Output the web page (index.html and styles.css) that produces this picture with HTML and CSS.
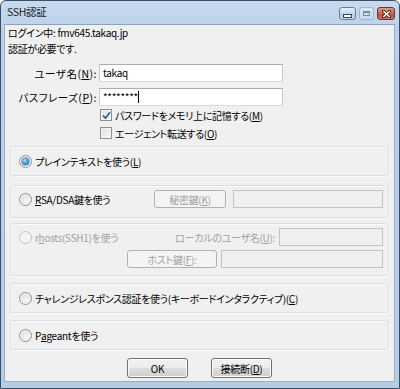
FILE: index.html
```html
<!DOCTYPE html>
<html lang="ja">
<head>
<meta charset="utf-8">
<title>SSH認証</title>
<link rel="stylesheet" href="styles.css">
</head>
<body>
<div class="window">
  <div class="titlebar">
    <span class="title">SSH認証</span>
    <div class="caps">
      <span class="cap cap-min"><span class="glyph-min"></span></span>
      <span class="cap cap-max"><span class="glyph-max"></span></span>
      <span class="cap cap-close"><svg width="9" height="8" viewBox="0 0 9 8"><path d="M1.2 1 L7.8 7 M7.8 1 L1.2 7" stroke="#3b1a16" stroke-width="3" stroke-linecap="square"/><path d="M1.2 1 L7.8 7 M7.8 1 L1.2 7" stroke="#fff" stroke-width="1.6"/></svg></span>
    </div>
  </div>
  <div class="client">
    <p class="info">ログイン中: fmv645.takaq.jp</p>
    <p class="info">認証が必要です.</p>
    <div class="field"><span class="lbl">ユーザ名(<u>N</u>):</span><span class="textbox">takaq</span></div>
    <div class="field last"><span class="lbl">パスフレーズ(<u>P</u>):</span><span class="textbox">********<span class="caret"></span></span></div>
    <div class="chk-row"><span class="check"><svg width="9" height="9" viewBox="0 0 9 9"><path d="M1 4.5 L3.5 7.2 L8 1.2" fill="none" stroke="#3d5a9c" stroke-width="1.8"/></svg></span>パスワードをメモリ上に記憶する(<u>M</u>)</div>
    <div class="chk-row"><span class="check"></span>エージェント転送する(<u>O</u>)</div>

    <div class="group g1">
      <div class="grow"><span class="radio on"></span>プレインテキストを使う(<u>L</u>)</div>
    </div>
    <div class="group g2">
      <div class="grow"><span class="radio"></span><span><u>R</u>SA/DSA鍵を使う</span><span class="btn dis w72 push">秘密鍵(<u>K</u>)</span><span class="textbox dis w150"></span></div>
    </div>
    <div class="group g3 disabled">
      <div class="grow"><span class="radio dis"></span>r<u>h</u>osts(SSH1)を使う<span class="push">ローカルのユーザ名(<u>U</u>):</span><span class="textbox dis w104"></span></div>
      <div class="grow"><span class="btn dis w90 push">ホスト鍵(<u>F</u>):</span><span class="textbox dis w162"></span></div>
    </div>
    <div class="group g4">
      <div class="grow"><span class="radio"></span>チャレンジレスポンス認証を使う(キーボードインタラクティブ)(<u>C</u>)</div>
    </div>
    <div class="group g5">
      <div class="grow"><span class="radio"></span>P<u>a</u>geantを使う</div>
    </div>
    <div class="buttons">
      <span class="btn w61">OK</span>
      <span class="btn w61">接続断(<u>D</u>)</span>
    </div>
  </div>
</div>
</body>
</html>
```

FILE: styles.css
```css
* { box-sizing: border-box; }
html, body { margin: 0; padding: 0; }
body {
  width: 400px;
  height: 389px;
  overflow: hidden;
  background: #fff;
  font-family: "Noto Sans CJK JP", "Noto Sans", sans-serif;
  font-size: 10px;
  letter-spacing: -0.3px;
  font-feature-settings: "palt";
  color: #000;
}
u { text-decoration: underline; text-underline-offset: 1px; }

.window {
  width: 400px;
  height: 389px;
  border: 1px solid #3d4e63;
  border-radius: 6px 6px 0 0;
  background: linear-gradient(#c7dbef, #b9d1ea 30px, #b4cde8);
  display: flex;
  flex-direction: column;
  padding: 0 4px 6px 3px;
}

.titlebar {
  height: 23px;
  display: flex;
  align-items: center;
  padding-left: 3px;
  flex: none;
}
.title { font-size: 10.5px; color: #1b1b1b; line-height: 1; }
.caps { margin-left: auto; display: flex; gap: 3px; align-items: center; margin-top: 2px; }
.cap {
  height: 13px;
  border-radius: 3px;
  display: flex;
  align-items: center;
  justify-content: center;
}
.cap-min {
  width: 17px;
  border: 1px solid #6b7f99;
  background: linear-gradient(#e4eefa, #c5d8ee 50%, #b2c9e5 51%, #c6d9ef);
}
.glyph-min { width: 9px; height: 4px; background: #fff; border: 1px solid #33465e; margin-top: 4px; }
.cap-max {
  width: 15px;
  border: 1px solid #9fb4cd;
  background: linear-gradient(#dce8f6, #c8daef);
}
.glyph-max { width: 7px; height: 5px; border: 1px solid #7289a6; border-top-width: 2px; }
.cap-close {
  width: 18px;
  border: 1px solid #6e3228;
  background: linear-gradient(#e39a8c, #d06655 50%, #c04a38 51%, #d56f5c);
}

.client {
  flex: 1;
  background: #f0f0f0;
  border: 1px solid #9bb0c8;
  border-top-color: #8ba3bf;
}

.info { margin: 0; line-height: 16px; height: 16px; padding-left: 3px; white-space: nowrap; }
.info + .field { margin-top: 7px; }

.field { display: flex; align-items: center; height: 18px; margin-bottom: 6px; }
.field.last { margin-bottom: 0; }
.lbl { width: 92px; text-align: right; margin-right: 2px; white-space: nowrap; font-size: 10.5px; letter-spacing: 0.5px; }
.textbox {
  display: flex;
  align-items: center;
  width: 184px;
  height: 18px;
  background: #fff;
  border: 1px solid #abadb3;
  border-left-color: #c6c9ce;
  border-right-color: #c6c9ce;
  border-bottom-color: #d6d9dd;
  padding-left: 3px;
  line-height: 1;
  white-space: nowrap;
}
.caret { width: 1px; height: 12px; background: #000; }
.textbox.dis { background: #f0f0f0; border: 1px solid #c3c3c3; }
.w150 { width: 150px; }
.w104 { width: 104px; }
.w162 { width: 162px; }

.chk-row {
  display: flex;
  align-items: center;
  height: 18px;
  padding-left: 95px;
  white-space: nowrap;
}
.check {
  width: 12px;
  height: 12px;
  border: 1px solid #8e8f8f;
  background: linear-gradient(135deg, #dcdcdc, #fbfbfb);
  box-shadow: inset 0 0 0 1px #f4f4f4;
  margin-right: 3px;
  display: flex;
  align-items: center;
  justify-content: center;
  flex: none;
}

.group {
  margin: 0 5px;
  border: 1px solid #d5dfe5;
  border-radius: 3px;
  box-shadow: inset 1px 1px 0 #fbfbfb, 1px 1px 0 #fbfbfb;
  padding: 5px 5px 5px 8px;
}
.g1 { margin-top: 4px; height: 30px; }
.g2 { margin-top: 9px; height: 33px; padding-top: 4px; }
.g3 { margin-top: 5px; height: 53px; padding-top: 4px; display: flex; flex-direction: column; gap: 4px; }
.g4 { margin-top: 7px; height: 30px; }
.g5 { margin-top: 7px; height: 30px; }

.grow { display: flex; align-items: center; height: 18px; white-space: nowrap; }
.push { margin-left: auto; }
.g2 .btn { margin-right: 7px; }
.g3 .grow > .push { margin-right: 4px; }
.g3 .btn { margin-right: 7px; }
.disabled { color: #a0a0a0; }

.radio {
  width: 13px;
  height: 13px;
  border-radius: 50%;
  border: 1px solid #8f8f8f;
  background: radial-gradient(circle at 60% 65%, #f6f6f6 0, #e2e2e2 60%, #cfcfcf 100%);
  box-shadow: inset 0 0 0 1px #f8f8f8;
  margin-right: 3px;
  flex: none;
  position: relative;
}
.radio.on::after {
  content: "";
  position: absolute;
  left: 2px;
  top: 2px;
  width: 7px;
  height: 7px;
  border-radius: 50%;
  background: radial-gradient(circle at 40% 35%, #b6e3ff 0, #4aa1e6 40%, #1a5fb4 100%);
  box-shadow: 0 0 0 0.5px #2a5f9e;
}
.radio.dis { border-color: #c2c2c2; background: #f4f4f4; box-shadow: none; }

.btn {
  display: flex;
  align-items: center;
  justify-content: center;
  height: 19px;
  border: 1px solid #707070;
  border-radius: 3px;
  background: linear-gradient(#f2f2f2, #ebebeb 50%, #dddddd 51%, #cfcfcf);
  box-shadow: inset 0 0 0 1px #fbfbfb;
  white-space: nowrap;
  flex: none;
}
.btn.dis {
  border-color: #adb2b5;
  background: #f4f4f4;
  color: #a0a0a0;
  box-shadow: none;
  height: 18px;
}
.w72 { width: 72px; }
.w90 { width: 90px; }
.w61 { width: 61px; }

.buttons {
  display: flex;
  justify-content: center;
  gap: 23px;
  margin-top: 8px;
}
.buttons .btn { height: 20px; }
```
